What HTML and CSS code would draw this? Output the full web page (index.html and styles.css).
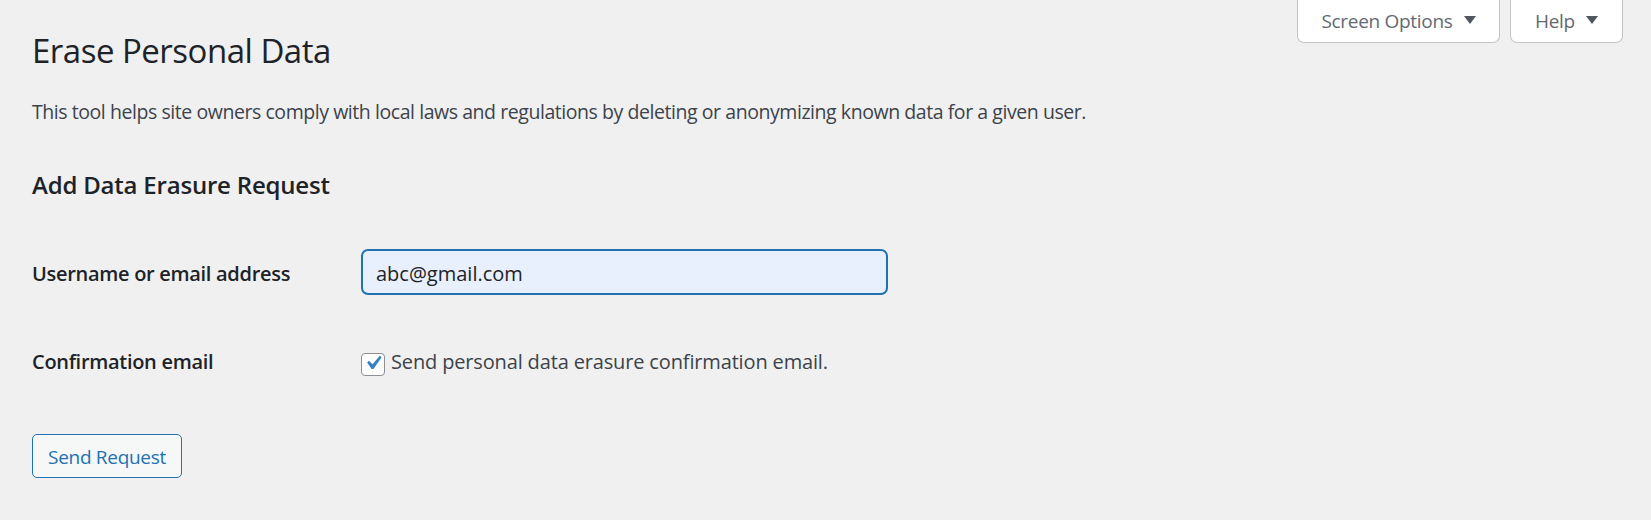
FILE: index.html
```html
<!DOCTYPE html>
<html lang="en">
<head>
<meta charset="utf-8">
<title>Erase Personal Data</title>
<link rel="stylesheet" href="styles.css">
</head>
<body>
<div class="screen-meta-links">
  <button class="meta-tab meta-tab-options" type="button">Screen Options <svg class="arrow" viewBox="0 0 12 8" width="12" height="8" aria-hidden="true"><path d="M0 0h12L6 8z" fill="#50575e"/></svg></button>
  <button class="meta-tab meta-tab-help" type="button">Help <svg class="arrow" viewBox="0 0 12 8" width="12" height="8" aria-hidden="true"><path d="M0 0h12L6 8z" fill="#50575e"/></svg></button>
</div>
<div class="wrap">
  <h1 class="page-title">Erase Personal Data</h1>
  <p class="intro">This tool helps site owners comply with local laws and regulations by deleting or anonymizing known data for a given user.</p>
  <h2 class="section-title">Add Data Erasure Request</h2>
  <form class="request-form">
    <div class="form-row form-row-user">
      <label class="row-label" for="username">Username or email address</label>
      <div class="row-field">
        <input class="text-input" id="username" type="text" value="abc@gmail.com">
      </div>
    </div>
    <div class="form-row form-row-confirm">
      <span class="row-label">Confirmation email</span>
      <label class="row-field check-field">
        <span class="checkbox">
          <svg viewBox="0 0 20 20" width="20" height="20" aria-hidden="true">
            <path d="M14.83 4.89l1.34.94-5.81 8.38H9.02L5.78 9.67l1.34-1.25 2.57 2.4z" fill="#3582c4"/>
          </svg>
        </span>
        <span class="check-text">Send personal data erasure confirmation email.</span>
      </label>
    </div>
    <button class="send-button" type="button">Send Request</button>
  </form>
</div>
</body>
</html>
```

FILE: styles.css
```css
html, body {
  margin: 0;
  padding: 0;
}

body {
  background: #f0f0f1;
  color: #3c434a;
  font-family: "Open Sans", "Noto Sans", sans-serif;
  height: 520px;
  overflow: hidden;
}

.screen-meta-links {
  float: right;
  display: flex;
  gap: 10px;
  margin-right: 28px;
}

.meta-tab {
  height: 43px;
  box-sizing: border-box;
  background: #fff;
  border: 1px solid #c3c4c7;
  border-top: none;
  border-radius: 0 0 7px 7px;
  color: #646970;
  font-family: "Open Sans", "Noto Sans", sans-serif;
  font-size: 19px;
  letter-spacing: -0.3px;
  padding: 0 0 1px 0;
  display: flex;
  align-items: center;
  justify-content: center;
  gap: 11px;
  cursor: pointer;
}

.meta-tab-options {
  width: 203px;
}

.meta-tab-help {
  width: 113px;
}

.arrow {
  display: block;
  width: 12px;
  height: 8px;
  margin-top: -2px;
}

.wrap {
  padding: 28px 0 0 32px;
}

.page-title {
  margin: 0;
  font-size: 33px;
  letter-spacing: -0.5px;
  line-height: 46px;
  font-weight: 400;
  color: #1d2327;
}

.intro {
  margin: 23px 0 0;
  font-size: 19.5px;
  letter-spacing: -0.44px;
  line-height: 30px;
  color: #3c434a;
}

.section-title {
  margin: 40px 0 0;
  font-size: 24px;
  letter-spacing: -0.2px;
  line-height: 36px;
  font-weight: 600;
  color: #1d2327;
}

.request-form {
  margin: 0;
}

.form-row {
  display: grid;
  grid-template-columns: 329px 1fr;
  align-items: baseline;
}

.form-row-user {
  margin-top: 46px;
}

.form-row-confirm {
  margin-top: 52px;
}

.row-label {
  font-size: 20px;
  letter-spacing: -0.3px;
  line-height: 30px;
  font-weight: 600;
  color: #1d2327;
}

.text-input {
  box-sizing: border-box;
  width: 527px;
  height: 46px;
  margin: 0;
  padding: 3px 13px 0;
  border: 2px solid #2271b1;
  border-radius: 7px;
  background: #e8f0fe;
  color: #1d2327;
  font-family: "Open Sans", "Noto Sans", sans-serif;
  font-size: 20px;
  outline: none;
}

.check-field {
  display: flex;
  align-items: baseline;
  gap: 6px;
  font-size: 20px;
  letter-spacing: -0.15px;
  line-height: 30px;
  color: #3c434a;
}

.checkbox {
  box-sizing: border-box;
  width: 24px;
  height: 23px;
  border: 1px solid #8c8f94;
  border-radius: 4px;
  background: #fff;
  display: inline-flex;
  align-items: center;
  justify-content: center;
  align-self: center;
  margin-top: 4px;
}

.checkbox svg {
  width: 28px;
  height: 28px;
  margin: -2px -3px 0 -3px;
}

.send-button {
  display: block;
  margin-top: 57px;
  box-sizing: border-box;
  width: 150px;
  height: 44px;
  padding: 2px 0 0;
  background: #f6f7f7;
  border: 1px solid #2271b1;
  border-radius: 5px;
  color: #2271b1;
  font-family: "Open Sans", "Noto Sans", sans-serif;
  font-size: 19px;
  letter-spacing: -0.3px;
  cursor: pointer;
}
```
